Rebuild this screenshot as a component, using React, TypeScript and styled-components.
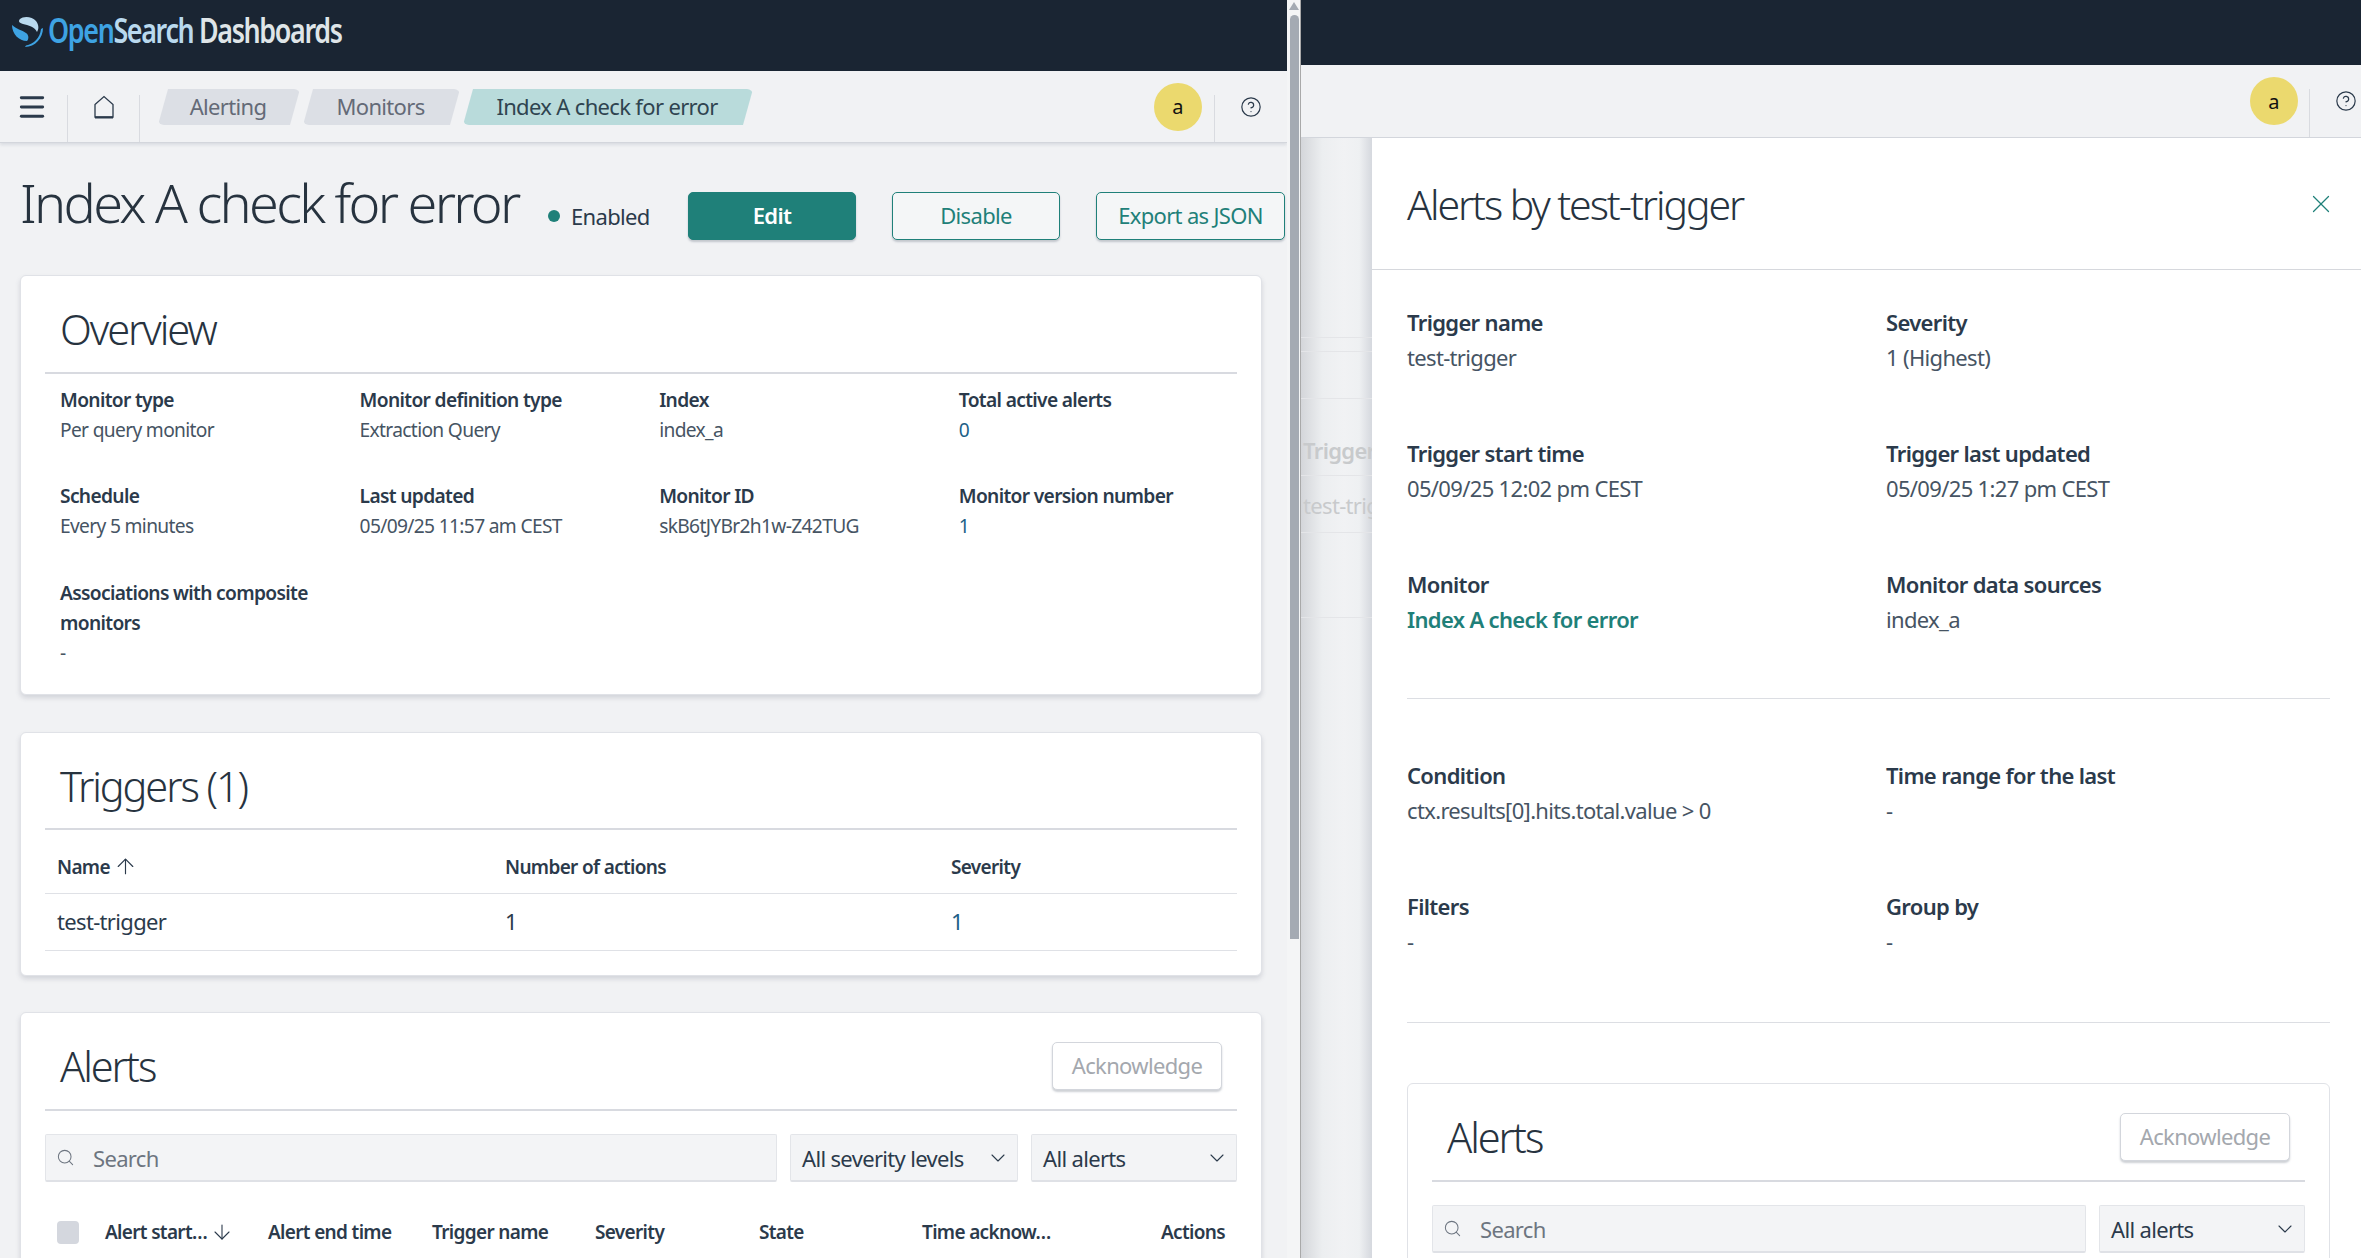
import React from "react";
import styled, { createGlobalStyle } from "styled-components";
import { ArrowDown, ArrowUp, ChevronDown, CircleHelp, Menu, Search, X } from "lucide-react";

const FONT = `"Noto Sans", "Open Sans", sans-serif`;
const INK = "#2b3a4b";
const TEAL = "#1f8079";

const GlobalStyle = createGlobalStyle`
  html, body { margin: 0; padding: 0; height: 100%; overflow: hidden; background: #f1f2f4; }
  body { font-family: ${FONT}; color: ${INK}; font-size: 19px; letter-spacing: -0.035em; font-stretch: 85%; }
  * { box-sizing: border-box; }
`;

const Screen = styled.div`
  display: flex;
  width: 2361px;
  height: 1258px;
  overflow: hidden;
`;

/* left browser window */
const LeftWindow = styled.div`
  display: flex;
  flex: 0 0 1301px;
  height: 100%;
  background: #fff;
  border-right: 1px solid #a9a9a9;
`;

const Main = styled.main`
  flex: 0 0 1287px;
  background: #f1f2f4;
  overflow: hidden;
`;

const ScrollTrack = styled.div`
  flex: 1;
  display: flex;
  flex-direction: column;
  align-items: center;
  padding: 0 1px 0 2px;
  background: #f4f5f6;
`;

const ScrollArrow = styled.div`
  width: 0;
  height: 0;
  margin-top: 2px;
  border-left: 5px solid transparent;
  border-right: 5px solid transparent;
  border-bottom: 8px solid #a4aab3;
`;

const ScrollThumb = styled.div`
  width: 9px;
  height: 924px;
  margin-top: 5px;
  border-radius: 5px 5px 0 0;
  background: #a4aab3;
`;

const TopBar = styled.header<{ $h: number }>`
  display: flex;
  align-items: center;
  height: ${(p) => p.$h}px;
  padding: 0 0 12px 12px;
  background: #1a2533;
`;

const LogoMark = styled.svg`
  flex: none;
  margin-top: 4px;
`;

const LogoText = styled.span`
  margin-left: 5px;
  font-size: 34px;
  font-weight: 600;
  letter-spacing: -0.05em;
  transform: scaleX(0.79);
  transform-origin: left center;
  color: #dfe5e8;
  white-space: nowrap;
`;

const Open = styled.span`
  color: #3ea3e3;
`;
const SearchWord = styled.span`
  color: #b9d9ee;
`;

const SubNav = styled.nav<{ $h: number }>`
  display: flex;
  align-items: stretch;
  height: ${(p) => p.$h}px;
  background: #f1f2f4;
  border-bottom: 1px solid #d3d6dc;
  box-shadow: 0 2px 3px rgba(80, 90, 110, 0.14);
`;

const NavCell = styled.div<{ $w: number; $shift?: number }>`
  display: flex;
  flex: 0 0 ${(p) => p.$w}px;
  align-items: center;
  justify-content: center;
  padding-right: ${(p) => p.$shift ?? 0}px;
  position: relative;
  &::after {
    content: "";
    position: absolute;
    right: 0;
    top: 24px;
    bottom: 0;
    width: 1px;
    background: #d9dbe0;
  }
`;

const NavPlain = styled.div<{ $w: number }>`
  display: flex;
  flex: 0 0 ${(p) => p.$w}px;
  align-items: center;
  justify-content: center;
`;

const NavSpacer = styled.div<{ $w: number }>`
  flex: 0 0 ${(p) => p.$w}px;
`;

const Crumbs = styled.div`
  display: flex;
  flex: 1;
  align-items: flex-start;
  gap: 3px;
  padding: 18px 0 0 18px;
`;

const Crumb = styled.div<{ $w: number; $active?: boolean }>`
  display: flex;
  align-items: center;
  justify-content: center;
  width: ${(p) => p.$w}px;
  height: 36px;
  padding: 0 2px 2px 0;
  font-size: 22px;
  white-space: nowrap;
  color: ${(p) => (p.$active ? "#2f4450" : "#646a77")};
  background: ${(p) => (p.$active ? "#b9dbdb" : "#dcdfe5")};
  border-radius: 6px;
  clip-path: polygon(10px 0, 100% 0, calc(100% - 10px) 100%, 0 100%);
`;

const Avatar = styled.div`
  display: flex;
  align-items: center;
  justify-content: center;
  width: 48px;
  height: 48px;
  border-radius: 50%;
  background: #ebd96e;
  color: #111;
  font-size: 20px;
`;

const Page = styled.div`
  padding: 0 25px 0 20px;
`;

const PageHead = styled.div`
  display: flex;
  align-items: center;
  height: 132px;
  white-space: nowrap;
`;

const PageTitle = styled.h1`
  flex: 0 0 521px;
  margin: 0 0 14px;
  font-size: 54px;
  font-weight: 300;
  letter-spacing: -0.05em;
  color: #27333f;
`;

const Status = styled.div`
  display: flex;
  flex: 0 0 136px;
  align-items: center;
  gap: 11px;
  padding-top: 13px;
  padding-left: 7px;
  font-size: 22px;
`;

const Dot = styled.i`
  flex: none;
  width: 12px;
  height: 12px;
  border-radius: 50%;
  background: ${TEAL};
`;

const Button = styled.button<{ $w: number; $variant?: "fill" | "line" | "off" }>`
  flex: 0 0 ${(p) => p.$w}px;
  height: 48px;
  margin-top: ${(p) => (p.$variant === "off" ? 0 : 13)}px;
  padding: 0 0 2px;
  font: inherit;
  font-size: 22px;
  letter-spacing: inherit;
  font-weight: ${(p) => (p.$variant === "fill" ? 600 : 400)};
  border-radius: 5px;
  color: ${(p) => (p.$variant === "fill" ? "#fff" : p.$variant === "off" ? "#a4a8ae" : TEAL)};
  background: ${(p) => (p.$variant === "fill" ? TEAL : p.$variant === "off" ? "#fff" : "#f4f6f7")};
  border: 1px solid ${(p) => (p.$variant === "off" ? "#d3d6dc" : TEAL)};
  box-shadow: 0 2px 2px rgba(60, 70, 90, 0.25);
`;

const ButtonGap = styled.div<{ $w: number }>`
  flex: 0 0 ${(p) => p.$w}px;
`;

const Card = styled.section<{ $h: number; $gap?: number }>`
  height: ${(p) => p.$h}px;
  margin-bottom: ${(p) => p.$gap ?? 37}px;
  padding: 0 24px;
  background: #fff;
  border: 1px solid #e0e2e7;
  border-radius: 6px;
  box-shadow: 0 3px 5px rgba(70, 80, 100, 0.18);
`;

const CardHead = styled.div<{ $h: number }>`
  display: flex;
  align-items: center;
  justify-content: space-between;
  height: ${(p) => p.$h}px;
  padding: 10px 15px 0;
  border-bottom: 2px solid #d8dae0;
`;

const CardTitle = styled.h2`
  margin: 0;
  font-size: 41.5px;
  font-weight: 300;
  letter-spacing: -0.05em;
  color: #27333f;
`;

const Facts = styled.div`
  display: grid;
  grid-template-columns: repeat(4, 299.6px);
  padding: 11px 15px 0;
`;

const Fact = styled.div<{ $h: number }>`
  height: ${(p) => p.$h}px;
  font-size: 19.2px;
  line-height: 30px;
`;

const Label = styled.div`
  font-weight: 600;
  color: #2b3a4b;
`;

const FactValue = styled.div`
  color: #465463;
`;

const Blue = styled.span`
  color: #1d5f87;
`;

const TriggerRow = styled.div<{ $head?: boolean }>`
  display: grid;
  grid-template-columns: 448px 446px 1fr;
  align-items: center;
  height: ${(p) => (p.$head ? 64 : 57)}px;
  padding: ${(p) => (p.$head ? "10px 12px 0" : "0 12px 3px")};
  border-bottom: 1px solid #dfe1e6;
  font-size: ${(p) => (p.$head ? 19 : 22)}px;
  font-weight: ${(p) => (p.$head ? 600 : 400)};
`;

const HeadCell = styled.span`
  display: flex;
  align-items: center;
  gap: 3px;
`;

const Filters = styled.div`
  display: flex;
  gap: 13px;
  margin-top: 23px;
`;

const SearchBox = styled.div`
  display: flex;
  flex: 1;
  align-items: center;
  gap: 18px;
  height: 48px;
  padding-left: 10px;
  font-size: 22px;
  color: #6d7580;
  background: #f3f4f6;
  border: 1px solid #e3e5e9;
  border-bottom: 2px solid #dfe1e6;
  border-radius: 2px;
`;

const Select = styled.div<{ $w: number }>`
  display: flex;
  flex: 0 0 ${(p) => p.$w}px;
  align-items: center;
  justify-content: space-between;
  height: 48px;
  padding: 0 7px 0 11px;
  font-size: 22px;
  white-space: nowrap;
  background: #f3f4f6;
  border: 1px solid #e3e5e9;
  border-bottom: 2px solid #dfe1e6;
  border-radius: 2px;
`;

const AlertCols = styled.div`
  display: grid;
  grid-template-columns: 48px 163px 164px 163px 164px 163px 239px 1fr;
  align-items: center;
  height: 46px;
  margin-top: 27px;
  padding: 0 12px;
  font-size: 19px;
  font-weight: 600;
  white-space: nowrap;
`;

const Check = styled.i`
  width: 22px;
  height: 23px;
  border-radius: 4px;
  background: #d4d7de;
`;

/* right browser window */
const RightWindow = styled.div`
  flex: 1;
  min-width: 0;
  height: 100%;
  overflow: hidden;
  background: #f1f2f4;
`;

const BackSlice = styled.div`
  flex: 0 0 71px;
  overflow: hidden;
  color: #c8cacc;
  background: linear-gradient(90deg, #d4d6da 0, #eceef0 30%, #f1f2f4 60%, #eef0f2 82%, #d5d8de 100%);
`;

const BackRow = styled.div<{ $h: number; $weight?: number; $lift?: number }>`
  display: flex;
  align-items: flex-end;
  height: ${(p) => p.$h}px;
  padding: 0 0 ${(p) => p.$lift ?? 0}px 2px;
  font-size: 22px;
  line-height: 30px;
  font-weight: ${(p) => p.$weight ?? 400};
  white-space: nowrap;
  border-bottom: 1px solid #e4e5e8;
`;

const SecondBody = styled.div`
  display: flex;
  height: 1120px;
`;

const Flyout = styled.aside`
  flex: 1;
  min-width: 0;
  background: #fff;
`;

const FlyoutHead = styled.div`
  display: flex;
  align-items: center;
  justify-content: space-between;
  height: 132px;
  padding: 0 25px 0 35px;
  border-bottom: 1px solid #d6d8dd;
`;

const FlyoutTitle = styled.h2`
  margin: 0;
  font-size: 41px;
  font-weight: 300;
  letter-spacing: -0.05em;
  color: #27333f;
`;

const FlyoutBody = styled.div`
  padding: 0 31px 0 35px;
`;

const DetailGrid = styled.div<{ $top: number; $bottom?: number }>`
  display: grid;
  grid-template-columns: 479px 1fr;
  grid-auto-rows: 131px;
  padding: ${(p) => p.$top}px 0 ${(p) => p.$bottom ?? 0}px;
  border-bottom: 1px solid #dcdee3;
`;

const Detail = styled.div`
  font-size: 22px;
  line-height: 35px;
`;

const Linked = styled.a`
  color: ${TEAL};
  font-weight: 600;
`;

const NestedCard = styled.div`
  margin-top: 60px;
  height: 300px;
  padding: 0 24px;
  border: 1px solid #e0e2e7;
  border-radius: 6px;
`;

const OpenSearchMark = () => (
  <LogoMark width="31" height="32" viewBox="0 0 31 32">
    <path d="M8 3c3-3 12-3 16 2 3 4 3 8 1 11-2-5-9-7-14-8C7 7 6 5 8 3z" fill="#b9d9ee" />
    <path d="M0 9c4 4 10 5 14 8 3 2 3 6 1 8C7 25 0 18 0 9z" fill="#3ea3e3" />
    <path d="M31 12c0 10-8 19-18 19l1-1.500c8-1.500 14-7.500 15-16.500z" fill="#3ea3e3" />
  </LogoMark>
);

const HomeIcon = () => (
  <svg width="22" height="24" viewBox="0 0 22 24" fill="none" stroke={INK}>
    <path d="M2 9.500 11 1.500l9 8V22H2z" strokeWidth="1.300" />
    <path d="M2 22.500h18" strokeWidth="2" />
  </svg>
);

const AlertsHeader = ({ h }: { h: number }) => (
  <CardHead $h={h}>
    <CardTitle>Alerts</CardTitle>
    <Button $w={170} $variant="off">
      Acknowledge
    </Button>
  </CardHead>
);

export default function App() {
  return (
    <>
      <GlobalStyle />
      <Screen>
        <LeftWindow>
          <Main>
            <TopBar $h={71}>
              <OpenSearchMark />
              <LogoText>
                <Open>Open</Open>
                <SearchWord>Search</SearchWord> Dashboards
              </LogoText>
            </TopBar>
            <SubNav $h={72}>
              <NavCell $w={68} $shift={4}>
                <Menu size={32} strokeWidth={2.2} color={INK} />
              </NavCell>
              <NavCell $w={72}>
                <HomeIcon />
              </NavCell>
              <Crumbs>
                <Crumb $w={142}>Alerting</Crumb>
                <Crumb $w={157}>Monitors</Crumb>
                <Crumb $w={290} $active>
                  Index A check for error
                </Crumb>
              </Crumbs>
              <NavCell $w={75}>
                <Avatar>a</Avatar>
              </NavCell>
              <NavPlain $w={72}>
                <CircleHelp size={22} strokeWidth={1.3} color={INK} />
              </NavPlain>
            </SubNav>
            <Page>
              <PageHead>
                <PageTitle>Index A check for error</PageTitle>
                <Status>
                  <Dot />
                  Enabled
                </Status>
                <ButtonGap $w={11} />
                <Button $w={168} $variant="fill">
                  Edit
                </Button>
                <ButtonGap $w={36} />
                <Button $w={168} $variant="line">
                  Disable
                </Button>
                <ButtonGap $w={36} />
                <Button $w={189} $variant="line">
                  Export as JSON
                </Button>
              </PageHead>
              <Card $h={420}>
                <CardHead $h={98}>
                  <CardTitle>Overview</CardTitle>
                </CardHead>
                <Facts>
                  <Fact $h={96}>
                    <Label>Monitor type</Label>
                    <FactValue>Per query monitor</FactValue>
                  </Fact>
                  <Fact $h={96}>
                    <Label>Monitor definition type</Label>
                    <FactValue>Extraction Query</FactValue>
                  </Fact>
                  <Fact $h={96}>
                    <Label>Index</Label>
                    <FactValue>index_a</FactValue>
                  </Fact>
                  <Fact $h={96}>
                    <Label>Total active alerts</Label>
                    <FactValue>
                      <Blue>0</Blue>
                    </FactValue>
                  </Fact>
                  <Fact $h={97}>
                    <Label>Schedule</Label>
                    <FactValue>Every 5 minutes</FactValue>
                  </Fact>
                  <Fact $h={97}>
                    <Label>Last updated</Label>
                    <FactValue>05/09/25 11:57 am CEST</FactValue>
                  </Fact>
                  <Fact $h={97}>
                    <Label>Monitor ID</Label>
                    <FactValue>skB6tJYBr2h1w-Z42TUG</FactValue>
                  </Fact>
                  <Fact $h={97}>
                    <Label>Monitor version number</Label>
                    <FactValue>
                      <Blue>1</Blue>
                    </FactValue>
                  </Fact>
                  <Fact $h={95}>
                    <Label>
                      Associations with composite
                      <br />
                      monitors
                    </Label>
                    <FactValue>-</FactValue>
                  </Fact>
                </Facts>
              </Card>
              <Card $h={244} $gap={36}>
                <CardHead $h={97}>
                  <CardTitle>Triggers (1)</CardTitle>
                </CardHead>
                <TriggerRow $head>
                  <HeadCell>
                    Name <ArrowUp size={25} strokeWidth={1.1} />
                  </HeadCell>
                  <span>Number of actions</span>
                  <span>Severity</span>
                </TriggerRow>
                <TriggerRow>
                  <span>test-trigger</span>
                  <span>1</span>
                  <Blue>1</Blue>
                </TriggerRow>
              </Card>
              <Card $h={400} $gap={0}>
                <AlertsHeader h={98} />
                <Filters>
                  <SearchBox>
                    <Search size={19} strokeWidth={1.3} />
                    Search
                  </SearchBox>
                  <Select $w={228}>
                    All severity levels <ChevronDown size={24} strokeWidth={1.1} />
                  </Select>
                  <Select $w={206}>
                    All alerts <ChevronDown size={24} strokeWidth={1.1} />
                  </Select>
                </Filters>
                <AlertCols>
                  <Check />
                  <HeadCell>
                    Alert start… <ArrowDown size={24} strokeWidth={1.1} />
                  </HeadCell>
                  <span>Alert end time</span>
                  <span>Trigger name</span>
                  <span>Severity</span>
                  <span>State</span>
                  <span>Time acknow…</span>
                  <span>Actions</span>
                </AlertCols>
              </Card>
            </Page>
          </Main>
          <ScrollTrack>
            <ScrollArrow />
            <ScrollThumb />
          </ScrollTrack>
        </LeftWindow>
        <RightWindow>
          <TopBar $h={65} />
          <SubNav $h={73}>
            <NavSpacer $w={936} />
            <NavCell $w={73}>
              <Avatar>a</Avatar>
            </NavCell>
            <NavPlain $w={72}>
              <CircleHelp size={22} strokeWidth={1.3} color={INK} />
            </NavPlain>
          </SubNav>
          <SecondBody>
            <BackSlice>
              <BackRow $h={200} />
              <BackRow $h={14} />
              <BackRow $h={47} />
              <BackRow $h={77} $weight={600} $lift={10}>
                Trigger name
              </BackRow>
              <BackRow $h={57} $lift={12}>
                test-trigger
              </BackRow>
              <BackRow $h={85} />
            </BackSlice>
            <Flyout>
              <FlyoutHead>
                <FlyoutTitle>Alerts by test-trigger</FlyoutTitle>
                <X size={30} strokeWidth={1} color={TEAL} />
              </FlyoutHead>
              <FlyoutBody>
                <DetailGrid $top={35}>
                  <Detail>
                    <Label>Trigger name</Label>
                    <FactValue>test-trigger</FactValue>
                  </Detail>
                  <Detail>
                    <Label>Severity</Label>
                    <FactValue>1 (Highest)</FactValue>
                  </Detail>
                  <Detail>
                    <Label>Trigger start time</Label>
                    <FactValue>05/09/25 12:02 pm CEST</FactValue>
                  </Detail>
                  <Detail>
                    <Label>Trigger last updated</Label>
                    <FactValue>05/09/25 1:27 pm CEST</FactValue>
                  </Detail>
                  <Detail>
                    <Label>Monitor</Label>
                    <Linked>Index A check for error</Linked>
                  </Detail>
                  <Detail>
                    <Label>Monitor data sources</Label>
                    <FactValue>index_a</FactValue>
                  </Detail>
                </DetailGrid>
                <DetailGrid $top={59} $bottom={2}>
                  <Detail>
                    <Label>Condition</Label>
                    <FactValue>ctx.results[0].hits.total.value &gt; 0</FactValue>
                  </Detail>
                  <Detail>
                    <Label>Time range for the last</Label>
                    <FactValue>-</FactValue>
                  </Detail>
                  <Detail>
                    <Label>Filters</Label>
                    <FactValue>-</FactValue>
                  </Detail>
                  <Detail>
                    <Label>Group by</Label>
                    <FactValue>-</FactValue>
                  </Detail>
                </DetailGrid>
                <NestedCard>
                  <AlertsHeader h={98} />
                  <Filters>
                    <SearchBox>
                      <Search size={19} strokeWidth={1.3} />
                      Search
                    </SearchBox>
                    <Select $w={206}>
                      All alerts <ChevronDown size={24} strokeWidth={1.1} />
                    </Select>
                  </Filters>
                </NestedCard>
              </FlyoutBody>
            </Flyout>
          </SecondBody>
        </RightWindow>
      </Screen>
    </>
  );
}
